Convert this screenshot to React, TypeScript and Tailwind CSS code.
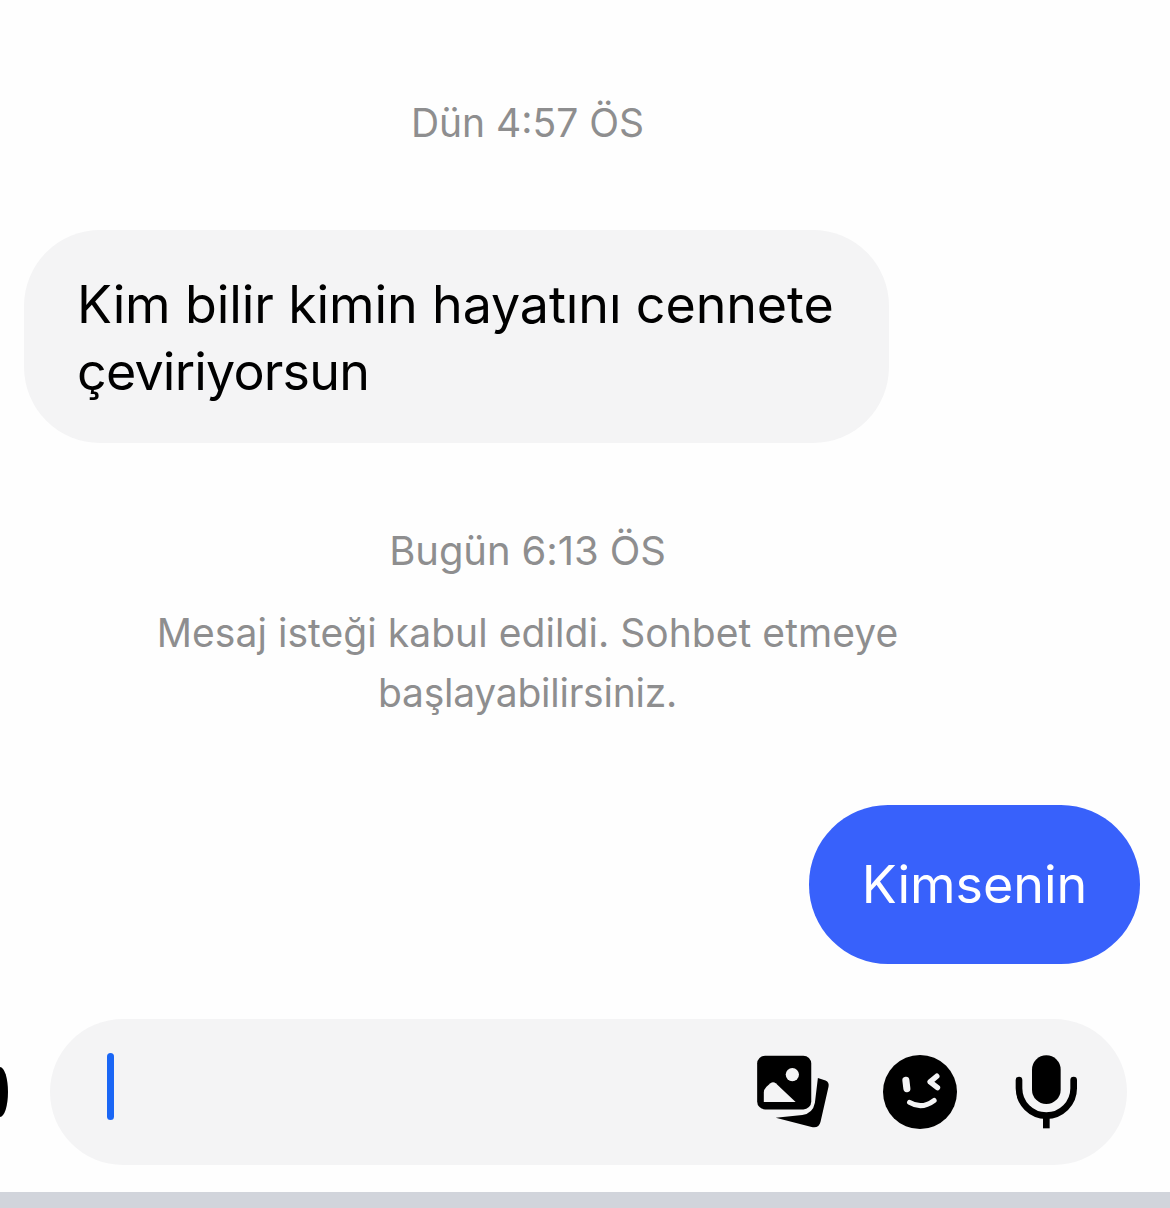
export default function App() {
  return (
    <div className="w-[1170px] h-[1208px] overflow-hidden bg-[#fefefe] flex flex-col font-['Inter','Liberation_Sans',sans-serif]">
      <div className="flex-1 flex flex-col">
        <p className="mt-[99px] w-[1055px] text-center text-[39px] leading-[48px] text-[#8e8e8f]">Dün 4:57 ÖS</p>
        <div className="mt-[83px] ml-6 w-[865px] h-[213px] rounded-[76px] bg-[#f4f4f5] pl-[53px] pt-[41px] text-[52px] tracking-[-0.12px] leading-[67px] text-black">
          <span>Kim bilir kimin hayatını cennete</span>
          <br />
          <span className="tracking-[-0.8px]">çeviriyorsun</span>
        </div>
        <p className="mt-[84px] w-[1055px] text-center text-[40px] tracking-[-0.1px] leading-[48px] text-[#8e8e8f]">Bugün 6:13 ÖS</p>
        <p className="mt-[28px] w-[1055px] text-center text-[39px] leading-[60px] tracking-[0.05px] text-[#8e8e8f]">
          <span>Mesaj isteği kabul edildi. Sohbet etmeye</span>
          <br />
          <span className="tracking-[-0.25px]">başlayabilirsiniz.</span>
        </p>
        <div className="mt-[82px] flex justify-end pr-[30px]">
          <div className="w-[331px] h-[159px] rounded-[79px] bg-[#3861fb] flex items-center justify-center text-[52px] text-white">Kimsenin</div>
        </div>
        <div className="mt-[55px] flex items-center">
          <div className="w-2 h-[50px] rounded-r-[8px_25px] bg-black" />
          <div className="ml-[42px] w-[1077px] h-[146px] rounded-[73px] bg-[#f4f4f5] flex items-center pl-[57px]">
            <div className="w-[7px] h-[67px] mb-[11px] rounded-full bg-[#1a66f5]" />
            <svg className="ml-[639px]" width="80" height="78" viewBox="40 70 240 235">
              <rect x="52" y="78" width="163" height="162" rx="24" fill="#000" />
              <circle cx="158" cy="135" r="20" fill="#f4f4f5" />
              <path d="M72 218V190Q72 180 80 172L92 161Q100 155 108 161L168 218Z" fill="#f4f4f5" />
              <path d="M235 145L258 153Q270 158 267 172L243 277Q238 298 216 293L108 265L188 257Q220 252 226 220Z" fill="#000" />
            </svg>
            <svg className="ml-[50px]" width="74" height="74" viewBox="428 75 220 220">
              <circle cx="538" cy="185" r="110" fill="#000" />
              <path d="M496 150L499 175" stroke="#f4f4f5" strokeWidth="21" strokeLinecap="round" fill="none" />
              <path d="M588 138L568 155L590 172" stroke="#f4f4f5" strokeWidth="16" strokeLinecap="round" strokeLinejoin="round" fill="none" />
              <path d="M507 216Q543 238 580 210" stroke="#f4f4f5" strokeWidth="15" strokeLinecap="round" fill="none" />
            </svg>
            <svg className="ml-[58px]" width="62" height="74" viewBox="826 75 186 222">
              <rect x="877" y="76" width="86" height="146" rx="43" fill="#000" />
              <path d="M838 150V175A82 82 0 0 0 1002 175V150" stroke="#000" strokeWidth="20" strokeLinecap="round" fill="none" />
              <path d="M920 255V295" stroke="#000" strokeWidth="20" fill="none" />
            </svg>
          </div>
        </div>
      </div>
      <div className="h-4 bg-[#d1d4db]" />
    </div>
  );
}
